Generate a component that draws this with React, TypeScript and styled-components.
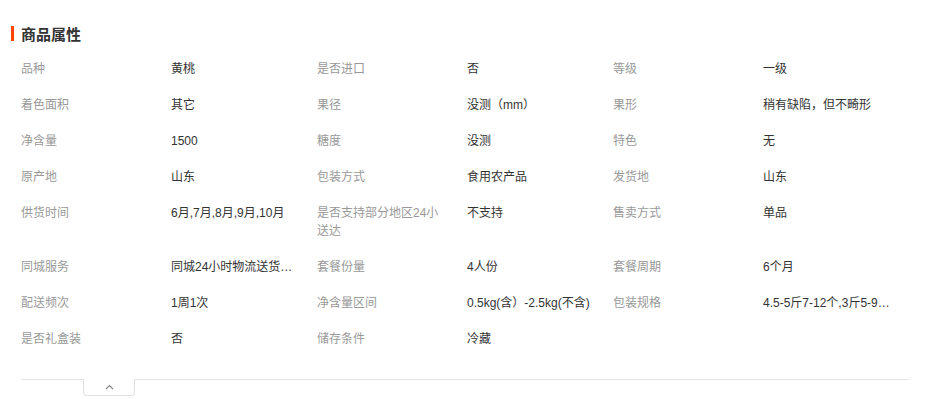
import React from 'react';
import styled, {createGlobalStyle} from 'styled-components';

const GlobalStyle = createGlobalStyle`
    body {
        margin: 0;
        background: #fff;
        font-family: "Liberation Sans", "Noto Sans CJK SC", sans-serif;
        font-size: 12px;
        color: #333;
    }
`;

const Panel = styled.div`
    width: 928px;
    padding: 24px 19px 3px 11px;
    box-sizing: border-box;
`;

const Title = styled.h3`
    display: flex;
    align-items: center;
    margin: 0 0 9px;
    height: 18px;
    font-size: 15px;
    font-weight: bold;
    color: #333;
    &::before {
        content: '';
        width: 3px;
        height: 15px;
        margin-right: 7px;
        background: #ff4400;
    }
`;

const Grid = styled.dl`
    display: grid;
    grid-template-columns: 150px 146px 150px 146px 150px 146px;
    margin: 0 0 22px 10px;
    align-items: start;
`;

const Label = styled.dt`
    padding: 9px 20px 9px 0;
    line-height: 18px;
    color: #999;
`;

const Value = styled.dd`
    margin: 0;
    padding: 9px 0;
    line-height: 18px;
    color: #333;
    max-width: 130px;
    white-space: nowrap;
    overflow: hidden;
    text-overflow: ellipsis;
`;

const Footer = styled.div`
    margin-left: 10px;
    border-top: 1px solid #e5e5e5;
    padding-left: 62px;
`;

const Toggle = styled.button`
    display: flex;
    align-items: center;
    justify-content: center;
    width: 52px;
    height: 17px;
    margin-top: -1px;
    padding: 0;
    background: #fff;
    border: 1px solid #e0e0e0;
    border-top: none;
    border-radius: 0 0 4px 4px;
    cursor: pointer;
`;

const attrs: [string, string][] = [
    ['品种', '黄桃'],
    ['是否进口', '否'],
    ['等级', '一级'],
    ['着色面积', '其它'],
    ['果径', '没测（mm）'],
    ['果形', '稍有缺陷，但不畸形'],
    ['净含量', '1500'],
    ['糖度', '没测'],
    ['特色', '无'],
    ['原产地', '山东'],
    ['包装方式', '食用农产品'],
    ['发货地', '山东'],
    ['供货时间', '6月,7月,8月,9月,10月'],
    ['是否支持部分地区24小送达', '不支持'],
    ['售卖方式', '单品'],
    ['同城服务', '同城24小时物流送货上门'],
    ['套餐份量', '4人份'],
    ['套餐周期', '6个月'],
    ['配送频次', '1周1次'],
    ['净含量区间', '0.5kg(含）-2.5kg(不含)'],
    ['包装规格', '4.5-5斤7-12个,3斤5-9个,2斤3-5个'],
    ['是否礼盒装', '否'],
    ['储存条件', '冷藏'],
];

export default function App() {
    return (
        <React.Fragment>
            <GlobalStyle />
            <Panel>
                <Title>商品属性</Title>
                <Grid>
                    {attrs.map(([label, value]) => (
                        <React.Fragment key={label}>
                            <Label>{label}</Label>
                            <Value title={value}>{value}</Value>
                        </React.Fragment>
                    ))}
                </Grid>
                <Footer>
                    <Toggle>
                        <svg width='9' height='6' viewBox='0 0 9 6'>
                            <path d='M1 5 L4.5 1.5 L8 5' fill='none' stroke='#888' strokeWidth='1.2' />
                        </svg>
                    </Toggle>
                </Footer>
            </Panel>
        </React.Fragment>
    );
}
